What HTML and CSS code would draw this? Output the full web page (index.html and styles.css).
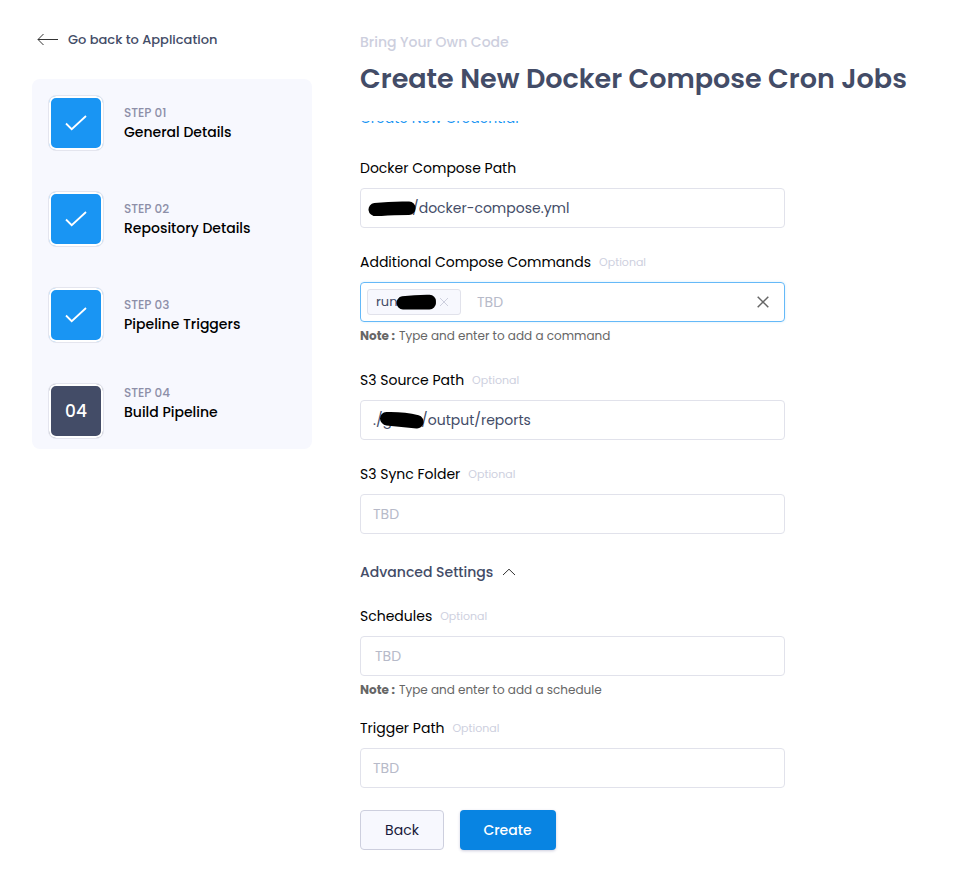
FILE: index.html
```html
<!DOCTYPE html>
<html lang="en">
<head>
<meta charset="utf-8">
<title>Create New Docker Compose Cron Jobs</title>
<link rel="stylesheet" href="styles.css">
</head>
<body>
<div class="page">
  <aside class="sidebar">
    <a class="back-link"><svg width="22" height="14" viewBox="0 0 22 14"><path d="M21 6.500H1M6.500 1L1 6.500l5.500 5.500"/></svg><span>Go back to Application</span></a>
    <ol class="steps">
      <li class="step"><span class="badge"><svg width="22" height="18" viewBox="0 0 22 18"><path d="M1 9.500l5.700 5.700L21 2"/></svg></span><div class="step-text"><span class="step-no">STEP 01</span><span class="step-name">General Details</span></div></li>
      <li class="step"><span class="badge"><svg width="22" height="18" viewBox="0 0 22 18"><path d="M1 9.500l5.700 5.700L21 2"/></svg></span><div class="step-text"><span class="step-no">STEP 02</span><span class="step-name">Repository Details</span></div></li>
      <li class="step"><span class="badge"><svg width="22" height="18" viewBox="0 0 22 18"><path d="M1 9.500l5.700 5.700L21 2"/></svg></span><div class="step-text"><span class="step-no">STEP 03</span><span class="step-name">Pipeline Triggers</span></div></li>
      <li class="step current"><span class="badge">04</span><div class="step-text"><span class="step-no">STEP 04</span><span class="step-name">Build Pipeline</span></div></li>
    </ol>
  </aside>
  <main class="main">
    <p class="eyebrow">Bring Your Own Code</p>
    <h1>Create New Docker Compose Cron Jobs</h1>
    <div class="scroll">
      <a class="credential">Create New Credential</a>
      <div class="field">
        <label>Docker Compose Path</label>
        <div class="input"><svg class="redact" width="49" height="16" viewBox="0 0 49 16"><path d="M7 9.500Q24 7.500 41 8M8 10Q22 8.500 41 8.500"/></svg><span class="value">/docker-compose.yml</span></div>
      </div>
      <div class="field">
        <label>Additional Compose Commands<small>Optional</small></label>
        <div class="input focused"><span class="tag"><span>run</span><svg class="redact" width="41" height="16" viewBox="0 0 41 16"><path d="M7 8.800Q20 7 33.500 7.200M7 9H33.500"/></svg><svg class="tag-x" width="10" height="10" viewBox="0 0 10 10"><path d="M1 1l8 8M9 1L1 9"/></svg></span><span class="placeholder">TBD</span><svg class="clear" width="12" height="12" viewBox="0 0 12 12"><path d="M.7.7l10.600 10.600M11.300.7L.7 11.300"/></svg></div>
        <p class="note"><b>Note :</b><span>Type and enter to add a command</span></p>
      </div>
      <div class="field">
        <label>S3 Source Path<small>Optional</small></label>
        <div class="input path"><span>./g</span><svg class="redact" width="46" height="18" viewBox="0 0 46 18"><path d="M7.500 7.500Q24 7 38 10.500M8 8L38 11"/></svg><span class="value">/output/reports</span></div>
      </div>
      <div class="field">
        <label>S3 Sync Folder<small>Optional</small></label>
        <div class="input"><span class="placeholder">TBD</span></div>
      </div>
      <div class="advanced"><span>Advanced Settings</span><svg width="14" height="8" viewBox="0 0 14 8"><path d="M1 7l6-5.800L13 7"/></svg></div>
      <div class="field schedule">
        <label>Schedules<small>Optional</small></label>
        <div class="input"><span class="placeholder">TBD</span></div>
        <p class="note"><b>Note :</b><span>Type and enter to add a schedule</span></p>
      </div>
      <div class="field">
        <label>Trigger Path<small>Optional</small></label>
        <div class="input"><span class="placeholder">TBD</span></div>
      </div>
      <div class="actions"><button class="secondary">Back</button><button class="primary">Create</button></div>
    </div>
  </main>
</div>
</body>
</html>
```
FILE: styles.css
```css
* { box-sizing: border-box; }
body { margin: 0; background: #fff; color: #000; font: 14px/24px Poppins, Inter, sans-serif; }
svg { display: block; flex: none; fill: none; stroke: currentColor; }
p, h1, ol { margin: 0; padding: 0; }
.page { display: flex; height: 877px; overflow: hidden; }
.sidebar { width: 280px; margin: 28px 48px 0 32px; flex: none; }
.back-link { display: flex; align-items: center; gap: 9px; height: 24px; padding-left: 5px; font-size: 13px; font-weight: 500; color: #434c67; white-space: nowrap; }
.back-link svg { color: #333; }
.steps { list-style: none; margin-top: 27px; height: 370px; padding: 16px; border-radius: 8px; background: #f7f8fe; }
.step { display: flex; gap: 20px; height: 96px; }
.badge { width: 56px; height: 56px; flex: none; display: grid; place-items: center; border: 1px solid #e4e5ee; border-radius: 8px; background: #1995f3; background-clip: padding-box; box-shadow: inset 0 0 0 2px #fff; color: #fff; font-size: 17px; font-weight: 500; }
.badge svg { stroke-width: 1.800; }
.current .badge { background: #434c67; background-clip: padding-box; }
.step-text { display: flex; flex-direction: column; padding-top: 8px; white-space: nowrap; }
.current .step-text { padding-top: 0; }
.step-no { font-size: 12px; line-height: 20px; font-weight: 500; color: #8d8fa8; }
.step-name { line-height: 18px; font-weight: 500; }
.main { width: 560px; padding-top: 30px; white-space: nowrap; }
.eyebrow { font-weight: 500; color: #cdcfde; }
h1 { font-size: 27px; line-height: 40px; font-weight: 600; color: #434c67; margin-top: 5px; }
.scroll { margin-top: 22px; width: 445px; height: 756px; overflow: hidden; }
.credential { display: block; margin-top: -15px; margin-bottom: 26px; color: #1995f3; }
.field { width: 425px; margin-bottom: 22px; }
label { display: flex; gap: 8px; margin-bottom: 8px; }
small { font-size: 11px; color: #cdcfde; }
.input { display: flex; align-items: center; height: 40px; padding: 0 12px; border: 1px solid #e1e2eb; border-radius: 4px; color: #434c67; }
.placeholder { color: #b7bac9; }
.redact { stroke: #000; stroke-width: 13; stroke-linecap: round; position: relative; }
.input > .redact { margin-left: -5px; }
.value { margin-left: -5px; }
.focused { border-color: #65b9f8; padding: 0 15px 0 6px; box-shadow: 0 0 3px #d7eefc; }
.tag { display: flex; align-items: center; width: 94px; height: 26px; padding-left: 8px; margin-right: 16px; border: 1px solid #e1e2eb; border-radius: 3px; background: #f7f8fe; font-size: 13px; }
.tag .redact { margin-left: -2px; }
.tag-x { margin-left: 2px; color: #cdcfde; }
.clear { margin-left: auto; color: #666; stroke-width: 1.500; }
.input.path .redact { margin-left: -13px; }
.path .value { margin-left: -4px; }
.note { display: flex; gap: 4px; margin-top: 4px; height: 20px; line-height: 20px; font-size: 12px; color: #666; }
.advanced { display: flex; align-items: center; gap: 9px; margin: 26px 0 20px; font-weight: 500; color: #434c67; }
.advanced svg { color: #333; }
.schedule { margin-bottom: 16px; }
.schedule .input { padding-left: 14px; }
.actions { display: flex; gap: 16px; }
button { height: 40px; padding: 0; border-radius: 4px; font: inherit; }
.secondary { width: 84px; border: 1px solid #cdcfde; background: #f7f8fe; color: #17193a; }
.primary { width: 96px; padding-right: 1px; border: 0; background: #0884e2; color: #fff; font-weight: 500; box-shadow: 0 1px 3px #ccd; }
```
